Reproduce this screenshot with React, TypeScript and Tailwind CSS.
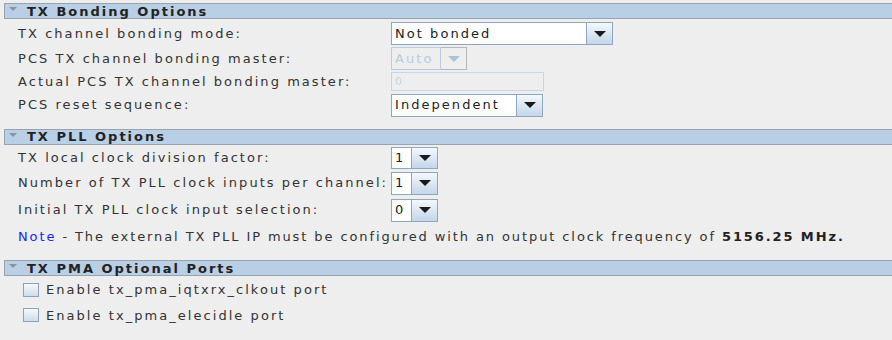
import React from "react";

const font = { fontFamily: '"DejaVu Sans", Verdana, sans-serif' };

function Header({ title }: { title: string }) {
  return (
    <div className="flex h-[16px] items-center border-y border-l border-[#9aa3ad] bg-[#b9cfe5] pl-[4px]">
      <svg width="8" height="5" viewBox="0 0 8 5" className="mr-[10px] mt-[-3px]">
        <polygon points="0,0 8,0 4,4" fill="#8a949e" />
      </svg>
      <span className="whitespace-nowrap text-[13px] font-bold leading-none tracking-[2px] text-[#222]">{title}</span>
    </div>
  );
}

function Arrow({ disabled }: { disabled?: boolean }) {
  return (
    <svg width="12" height="6" viewBox="0 0 12 6">
      <polygon points="0,0 12,0 6,6" fill={disabled ? "#a9c3de" : "#1a1a1a"} />
    </svg>
  );
}

function Combo({
  text,
  fieldW,
  h,
  disabled,
}: {
  text: string;
  fieldW: number;
  h: number;
  disabled?: boolean;
}) {
  return (
    <div className="flex" style={{ height: h }}>
      <div
        className={`flex items-center whitespace-nowrap border pl-[3px] text-[13px] tracking-[2.05px] ${
          disabled ? "border-[#b8cde2] bg-[#eeeeee] text-[#b4cbe3]" : "border-[#8ea6be] bg-white text-[#222]"
        }`}
        style={{ width: fieldW }}
      >
        {text}
      </div>
      <div
        className={`flex w-[26px] items-center justify-center border border-l-0 ${
          disabled
            ? "border-[#b8b8b8] bg-[#eeeeee]"
            : "border-[#8ea6be] bg-gradient-to-b from-[#f4f8fc] to-[#c3d6ea]"
        }`}
      >
        <Arrow disabled={disabled} />
      </div>
    </div>
  );
}

function Label({ children }: { children: React.ReactNode }) {
  return (
    <div className="w-[387px] shrink-0 whitespace-nowrap pl-[14px] text-[13px] tracking-[2.05px] text-[#333]">
      {children}
    </div>
  );
}

function Check({ label }: { label: string }) {
  return (
    <div className="flex items-center pl-[19px]">
      <div className="h-[14px] w-[16px] border border-[#8fa2b5] bg-gradient-to-b from-[#f7f9fc] to-[#cfdcea]" />
      <span className="ml-[7px] whitespace-nowrap text-[13px] tracking-[2.05px] text-[#333]">{label}</span>
    </div>
  );
}

export default function App() {
  return (
    <div className="h-[340px] w-[892px] overflow-hidden bg-[#eeeeee] pl-[4px] pt-[3px]" style={font}>
      <Header title="TX Bonding Options" />
      <div className="mt-[3px] flex items-center">
        <Label>TX channel bonding mode:</Label>
        <Combo text="Not bonded" fieldW={196} h={23} />
      </div>
      <div className="mt-[2px] flex items-center">
        <Label>PCS TX channel bonding master:</Label>
        <Combo text="Auto" fieldW={50} h={23} disabled />
      </div>
      <div className="mt-[2px] flex items-center">
        <Label>Actual PCS TX channel bonding master:</Label>
        <div className="flex h-[19px] w-[153px] items-center border border-[#c4d7ea] bg-[#eeeeee] pl-[3px] text-[11px] text-[#c4d4e4]">
          0
        </div>
      </div>
      <div className="mt-[2px] flex items-center">
        <Label>PCS reset sequence:</Label>
        <Combo text="Independent" fieldW={126} h={23} />
      </div>

      <div className="mt-[12px]">
        <Header title="TX PLL Options" />
      </div>
      <div className="mt-[2px] flex items-center">
        <Label>TX local clock division factor:</Label>
        <Combo text="1" fieldW={21} h={22} />
      </div>
      <div className="mt-[3px] flex items-center">
        <Label>Number of TX PLL clock inputs per channel:</Label>
        <Combo text="1" fieldW={21} h={23} />
      </div>
      <div className="mt-[4px] flex items-center">
        <Label>Initial TX PLL clock input selection:</Label>
        <Combo text="0" fieldW={21} h={23} />
      </div>
      <div className="mt-[5px] whitespace-nowrap pl-[14px] text-[13px] tracking-[1.9px] text-[#333]">
        <span className="text-[#2424f0]">Note</span> - The external TX PLL IP must be configured with an output clock
        frequency of <span className="font-bold text-[#222]">5156.25 MHz.</span>
      </div>

      <div className="mt-[14px]">
        <Header title="TX PMA Optional Ports" />
      </div>
      <div className="mt-[4px]">
        <Check label="Enable tx_pma_iqtxrx_clkout port" />
      </div>
      <div className="mt-[6px]">
        <Check label="Enable tx_pma_elecidle port" />
      </div>
    </div>
  );
}
